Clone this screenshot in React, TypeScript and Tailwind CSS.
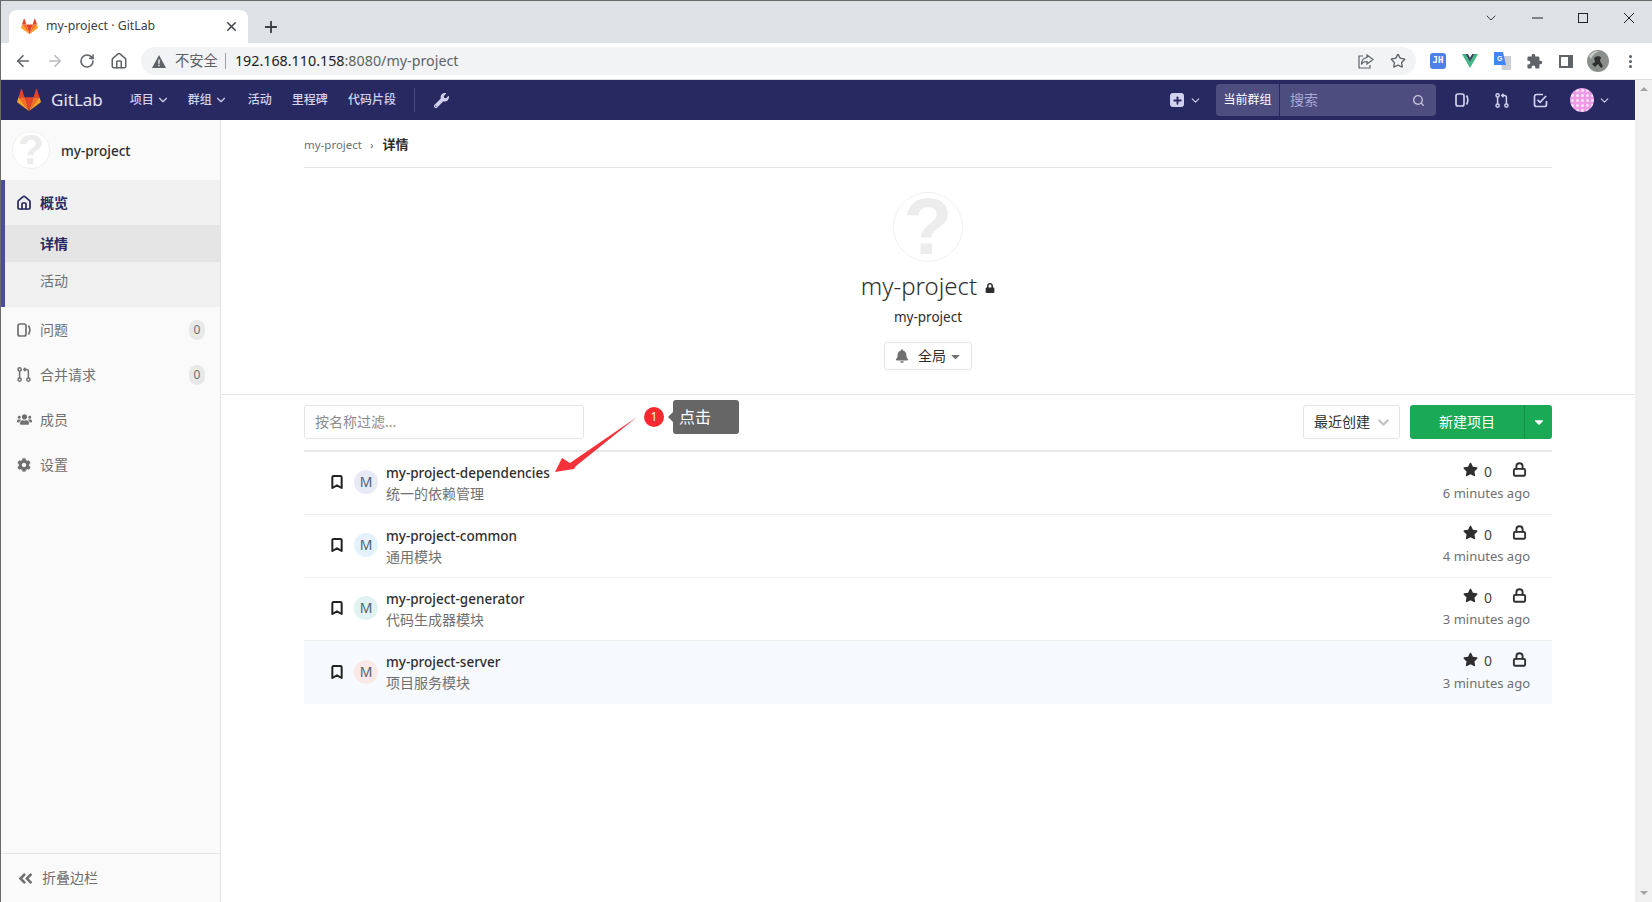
import { ArrowLeft, ArrowRight, Bookmark, ChevronDown, House, Lock, MoreVertical, RotateCw, Search, Star, X, Plus } from 'lucide-react';
import { FaAngleDoubleLeft, FaBell, FaCaretDown, FaCog, FaLock, FaStar, FaUsers, FaWrench } from 'react-icons/fa';
import { MdExtension } from 'react-icons/md';

const FONT = "font-['Noto_Sans','Noto_Sans_CJK_SC',sans-serif]";

const projects = [
  { name: 'my-project-dependencies', desc: '统一的依赖管理', time: '6 minutes ago', avatar: 'bg-[#e8eaf6]' },
  { name: 'my-project-common', desc: '通用模块', time: '4 minutes ago', avatar: 'bg-[#e3f2fd]' },
  { name: 'my-project-generator', desc: '代码生成器模块', time: '3 minutes ago', avatar: 'bg-[#e0f2f1]' },
  { name: 'my-project-server', desc: '项目服务模块', time: '3 minutes ago', avatar: 'bg-[#fbe9e7]', hover: true },
];

function Tanuki({ size }: { size: number }) {
  return (
    <svg width={size} height={size} viewBox="0 0 36 34">
      <path fill="#e24329" d="M18 33.5 24.6 13H11.4z" />
      <path fill="#fc6d26" d="M18 33.5 11.4 13H2.2z" />
      <path fill="#fca326" d="M2.2 13 .2 19.2c-.2.6 0 1.2.5 1.5L18 33.5z" />
      <path fill="#e24329" d="M2.2 13h9.2L7.4.8c-.2-.6-1-.6-1.2 0z" />
      <path fill="#fc6d26" d="M18 33.5 24.6 13h9.2z" />
      <path fill="#fca326" d="M33.8 13l2 6.2c.2.6 0 1.2-.5 1.5L18 33.5z" />
      <path fill="#e24329" d="M33.8 13h-9.2L28.6.8c.2-.6 1-.6 1.2 0z" />
    </svg>
  );
}

function IssuesIcon({ className }: { className?: string }) {
  return (
    <svg width="14" height="14" viewBox="0 0 14 14" fill="none" stroke="currentColor" strokeWidth="1.7" className={className}>
      <rect x="1" y="1" width="8" height="12" rx="2" />
      <path d="M11.5 2.5c1.6 2.6 1.6 6.4 0 9" />
    </svg>
  );
}

function MergeIcon({ className }: { className?: string }) {
  return (
    <svg width="14" height="15" viewBox="0 0 14 15" fill="none" stroke="currentColor" strokeWidth="1.5" className={className}>
      <circle cx="2.6" cy="2.4" r="1.6" />
      <circle cx="2.6" cy="12.6" r="1.6" />
      <circle cx="11.4" cy="12.6" r="1.6" />
      <path d="M2.6 4v7M11.4 11V4.500c0-1.200-.8-2-2-2H7" />
      <path d="M8.500.8 6.800 2.500l1.700 1.700" />
    </svg>
  );
}

function TodoIcon() {
  return (
    <svg width="15" height="15" viewBox="0 0 15 15" fill="none" stroke="currentColor" strokeWidth="1.7">
      <path d="M13.500 8v3.500a2 2 0 0 1-2 2h-8a2 2 0 0 1-2-2v-8a2 2 0 0 1 2-2H10" />
      <path d="m4.500 6.800 2.600 2.600 6-6.400" />
    </svg>
  );
}

function ProjectIdenticon({ className }: { className: string }) {
  return (
    <div className={`flex items-center justify-center rounded-full bg-white border border-[#f0f0f0] text-[#ececec] font-bold font-['Liberation_Sans',sans-serif] ${className}`}>
      ?
    </div>
  );
}

function ToolSlot({ children }: { children: React.ReactNode }) {
  return <div className="w-8 h-full flex items-center justify-center shrink-0">{children}</div>;
}

function BrowserChrome() {
  return (
    <div className="shrink-0">
      <div className="h-[43px] bg-[#dee1e6] border-t border-[#6b6b6b] flex items-end pl-2">
        <div className="w-[239px] h-[33px] bg-white rounded-t-lg flex items-center pl-3 pr-[9px] text-[#3c4043] text-[12.3px]">
          <Tanuki size={17} />
          <span className="ml-2 flex-1">my-project · GitLab</span>
          <X size={15} strokeWidth={2.5} className="text-[#45494d]" />
        </div>
        <div className="h-[33px] ml-[14px] flex items-center">
          <Plus size={18} strokeWidth={2.5} className="text-[#3c4043]" />
        </div>
        <div className="flex-1" />
        <div className="self-start mt-[9px] flex items-center text-[#222] pr-[17px]">
          <ChevronDown size={16} strokeWidth={1.3} className="mr-[33px]" />
          <svg width="11" height="2" className="mr-[35px]"><path d="M0 1h11" stroke="currentColor" /></svg>
          <svg width="10" height="10" className="mr-[35px]"><rect x=".5" y=".5" width="9" height="9" fill="none" stroke="currentColor" /></svg>
          <svg width="12" height="12"><path d="M1 1l10 10M11 1 1 11" stroke="currentColor" /></svg>
        </div>
      </div>
      <div className="h-[37px] bg-white border-b border-[#dadce0] flex items-center pl-[6px] text-[#5f6368]">
        <ToolSlot><ArrowLeft size={18} strokeWidth={2.2} /></ToolSlot>
        <ToolSlot><ArrowRight size={18} strokeWidth={2.2} className="text-[#b8babd]" /></ToolSlot>
        <ToolSlot><RotateCw size={16} strokeWidth={2.4} /></ToolSlot>
        <ToolSlot><House size={18} strokeWidth={2} /></ToolSlot>
        <div className="ml-[6px] w-[1275px] shrink-0 h-7 rounded-full bg-[#f1f3f4] flex items-center pl-[11px] pr-[10px] text-[14.3px]">
          <svg width="14" height="13" viewBox="0 0 14 13"><path fill="#5f6368" d="M7 0l7 13H0z" /><path fill="#f1f3f4" d="M6.300 4.500h1.400v4.300H6.300zM6.300 9.800h1.400v1.400H6.300z" /></svg>
          <span className="ml-[9px] text-[#5f6368]">不安全</span>
          <span className="ml-[7px] h-4 w-px bg-[#9aa0a6]" />
          <span className="ml-[9px] text-[#202124]">192.168.110.158<span className="text-[#5f6368]">:8080/my-project</span></span>
          <div className="flex-1" />
          <svg width="16" height="15" viewBox="0 0 16 15" fill="none" stroke="currentColor" strokeWidth="1.2">
            <path d="M5 2H1v12h11v-3" />
            <path d="M9 1l6 4.500L9 10V7.500c-3 0-4.500 1-5.500 3 0-4 2-6.500 5.500-7z" />
          </svg>
          <Star size={16} strokeWidth={2} className="ml-[16px]" />
        </div>
        <div className="ml-[6px] flex h-full">
          <ToolSlot>
            <div className="w-4 h-4 rounded-[3px] bg-[#4f7fe8] text-white text-[9px] font-bold flex items-center justify-center font-['DejaVu_Sans_Mono',monospace]">JH</div>
          </ToolSlot>
          <ToolSlot>
            <svg width="16" height="14" viewBox="0 0 16 14">
              <path fill="#41b883" d="M0 0h3.400L8 8l4.600-8H16L8 14z" />
              <path fill="#35495e" d="M3.400 0h2.500L8 3.800 10.100 0h2.500L8 8z" />
            </svg>
          </ToolSlot>
          <ToolSlot>
            <svg width="17" height="18" viewBox="0 0 17 18">
              <path fill="#ccd0d4" d="M6 4h11v14H8z" />
              <path fill="#4285f4" d="M0 0h9l3 13H0z" />
              <text x="3" y="9" fontSize="7" fill="white" fontWeight="700" fontFamily="Liberation Sans">G</text>
            </svg>
          </ToolSlot>
          <ToolSlot><MdExtension size={17} /></ToolSlot>
          <ToolSlot>
            <svg width="14" height="13"><path fillRule="evenodd" fill="currentColor" d="M0 0h14v13H0zM2 2v9h7V2z" /></svg>
          </ToolSlot>
          <ToolSlot>
            <svg width="22" height="22" viewBox="0 0 22 22">
              <circle cx="11" cy="11" r="11" fill="#8b8f8c" />
              <path fill="#2f2f2f" d="M7 8c2-2 5-2 7-1l-1 4 3 5-2 2-3-4-3 3-3-3 3-2z" />
              <path fill="#c9cbc8" d="M2 6c3-4 6-5 10-5-3 2-6 3-8 8z" />
            </svg>
          </ToolSlot>
          <ToolSlot><MoreVertical size={17} strokeWidth={2.4} /></ToolSlot>
        </div>
      </div>
    </div>
  );
}

function TopNav() {
  return (
    <div className="h-10 shrink-0 bg-[#292961] flex items-center pl-4 text-[#d1d1f0] text-xs">
      <Tanuki size={24} />
      <span className="ml-[10px] text-[17px] text-[#e4e4f4]">GitLab</span>
      <span className="ml-[27px] font-medium">项目</span>
      <ChevronDown size={14} className="ml-[2px]" />
      <span className="ml-[18px] font-medium">群组</span>
      <ChevronDown size={14} className="ml-[2px]" />
      <span className="ml-[20px] font-medium">活动</span>
      <span className="ml-[20px] font-medium">里程碑</span>
      <span className="ml-[20px] font-medium">代码片段</span>
      <span className="ml-[18px] h-[24px] w-px bg-[#4a4a82]" />
      <FaWrench size={15} className="ml-[19px]" />
      <div className="flex-1" />
      <div className="w-[14px] h-[14px] rounded-[3px] bg-[#d1d1f0] flex items-center justify-center">
        <Plus size={11} strokeWidth={4} className="text-[#292961]" />
      </div>
      <ChevronDown size={13} className="ml-[5px]" />
      <div className="ml-[14px] w-[220px] h-8 rounded bg-[#4d4d80] flex items-center">
        <div className="w-[64px] h-full border-r border-[#292961] flex items-center justify-center text-white">当前群组</div>
        <span className="ml-[10px] text-sm text-[#a9a9d6]">搜索</span>
        <div className="flex-1" />
        <Search size={13} strokeWidth={2.6} className="mr-[11px] text-[#c4c4dc]" />
      </div>
      <IssuesIcon className="ml-[19px]" />
      <MergeIcon className="ml-[26px]" />
      <div className="ml-[24px]"><TodoIcon /></div>
      <svg width="24" height="24" viewBox="0 0 24 24" className="ml-[22px]">
        <defs>
          <pattern id="av" width="5" height="5" patternUnits="userSpaceOnUse">
            <rect width="5" height="5" fill="#ee9be6" />
            <circle cx="2.500" cy="2.500" r="1.500" fill="#fbe3f8" />
          </pattern>
        </defs>
        <circle cx="12" cy="12" r="12" fill="url(#av)" />
      </svg>
      <ChevronDown size={13} className="ml-[4px]" />
      <div className="w-[24px]" />
    </div>
  );
}

function SideRow({ icon, label, count }: { icon: React.ReactNode; label: string; count?: number }) {
  return (
    <div className="h-[45px] flex items-center pl-4 pr-[15px] text-sm text-[#707070]">
      <span className="w-[23px] flex items-center">{icon}</span>
      <span className="flex-1">{label}</span>
      {count !== undefined && (
        <span className="w-4 h-5 rounded-full bg-[#e8e8e8] flex items-center justify-center text-xs">{count}</span>
      )}
    </div>
  );
}

function Sidebar() {
  return (
    <aside className="w-[220px] shrink-0 bg-[#fafafa] border-r border-[#e5e5e5] flex flex-col">
      <div className="h-[60px] flex items-center pl-[11px]">
        <ProjectIdenticon className="w-[38px] h-[38px] text-[42px] leading-none" />
        <span className="ml-[11px] mt-[2px] text-[13.5px] font-medium text-[#2e2e2e]">my-project</span>
      </div>
      <div className="h-[127px] bg-[#f0f0f0] border-l-4 border-[#4b4ba3]">
        <div className="h-[45px] flex items-center pl-[11px] text-sm font-bold text-[#292961]">
          <House size={16} strokeWidth={2.6} />
          <span className="ml-[8px]">概览</span>
        </div>
        <div className="h-[37px] flex items-center pl-[35px] bg-[#e5e5e5] text-sm font-bold text-[#292961]">详情</div>
        <div className="h-[37px] flex items-center pl-[35px] text-sm text-[#707070]">活动</div>
      </div>
      <SideRow icon={<IssuesIcon />} label="问题" count={0} />
      <SideRow icon={<MergeIcon />} label="合并请求" count={0} />
      <SideRow icon={<FaUsers size={15} />} label="成员" />
      <SideRow icon={<FaCog size={14} />} label="设置" />
      <div className="flex-1" />
      <div className="h-[49px] border-t border-[#e5e5e5] flex items-center pl-4 text-sm text-[#707070]">
        <FaAngleDoubleLeft size={17} />
        <span className="ml-2">折叠边栏</span>
      </div>
    </aside>
  );
}

function ProjectRow({ project }: { project: (typeof projects)[number] }) {
  return (
    <div className={`h-[63px] flex items-center border-b border-[#eeeeee] pl-[25px] pr-[22px] ${project.hover ? 'bg-[#f6fafe] border-b-0' : ''}`}>
      <Bookmark size={16} strokeWidth={3} className="text-[#222] mb-[2px]" />
      <div className={`ml-[9px] mb-[2px] w-[24px] h-[24px] rounded-full flex items-center justify-center text-sm text-[#555f7a] ${project.avatar}`}>M</div>
      <div className="ml-2 flex-1">
        <div className="text-[13.5px] leading-[21px] font-medium text-[#2e2e2e]">{project.name}</div>
        <div className="text-sm leading-[20px] text-[#707070]">{project.desc}</div>
      </div>
      <div className="flex flex-col items-end">
        <div className="h-[21px] flex items-center text-[#2e2e2e] text-sm pr-[3px] -translate-y-[3px]">
          <FaStar size={15} />
          <span className="ml-[6px] text-[#444] translate-y-[2px]">0</span>
          <Lock size={15} strokeWidth={3} className="ml-[20px]" />
        </div>
        <div className="text-[13px] leading-[21px] text-[#707070]">{project.time}</div>
      </div>
    </div>
  );
}

function Main() {
  return (
    <main className="relative flex-1 bg-white flex flex-col">
      <div className="mx-[83px] h-[48px] border-b border-[#e5e5e5] flex items-center pt-[3px] text-[11.5px]">
        <span className="text-[#707070]">my-project</span>
        <span className="ml-[8px] mr-[9px] text-[#707070]">›</span>
        <span className="font-bold text-[#2e2e2e] text-[13px]">详情</span>
      </div>
      <div className="h-[227px] border-b border-[#e5e5e5] flex flex-col items-center">
        <ProjectIdenticon className="mt-[24px] w-[70px] h-[70px] text-[80px] leading-none" />
        <div className="mt-[6px] flex items-center text-[#2e2e2e]">
          <span className="text-[24px] leading-[36px] font-light">my-project</span>
          <FaLock size={10} className="ml-2 mt-1" />
        </div>
        <div className="mt-[3px] text-[13.5px] leading-5 text-[#2e2e2e]">my-project</div>
        <div className="mt-[15px] w-[88px] h-[28px] border border-[#e5e5e5] rounded-[3px] flex items-center pl-[10px] text-sm text-[#2e2e2e]">
          <FaBell size={14} className="text-[#707070]" />
          <span className="ml-[9px]">全局</span>
          <FaCaretDown size={13} className="ml-[3px] text-[#707070]" />
        </div>
      </div>
      <div className="mx-[83px] flex flex-col">
        <div className="h-[57px] flex items-start pt-[10px] border-b-2 border-[#e8e8e8]">
          <div className="w-[280px] h-[34px] border border-[#e5e5e5] rounded-[3px] flex items-center pl-[10px] text-sm text-[#8c8c8c]">按名称过滤...</div>
          <div className="flex-1" />
          <div className="w-[97px] h-[34px] border border-[#e5e5e5] rounded-[3px] flex items-center pl-[10px] text-sm text-[#2e2e2e]">
            <span>最近创建</span>
            <ChevronDown size={17} strokeWidth={3} className="ml-[5px] text-[#c4c4c4]" />
          </div>
          <div className="ml-[10px] w-[142px] h-[34px] rounded-[3px] bg-[#1aaa55] flex text-white">
            <div className="w-[115px] flex items-center justify-center text-sm border-r border-[#168f48]">新建项目</div>
            <div className="flex-1 flex items-center justify-center"><FaCaretDown size={14} /></div>
          </div>
        </div>
        {projects.map((project) => (
          <ProjectRow key={project.name} project={project} />
        ))}
      </div>
      {/* step annotation pasted over the page */}
      <svg width="100" height="70" viewBox="0 0 100 70" className="absolute left-[330px] top-[290px]">
        <path fill="#f5323a" d="M86 7 19 53l-8-5-7 14 19-3 2-3z" />
      </svg>
      <div className="absolute left-[423px] top-[287px] w-5 h-5 rounded-full bg-[#f5292f] text-white text-xs flex items-center justify-center">1</div>
      <div className="absolute left-[452px] top-[280px] w-[66px] h-[34px] rounded-[3px] bg-[#666666] text-white text-base flex items-center pl-[6px]">
        点击
        <span className="absolute -left-[5px] top-[12px] w-0 h-0 border-y-[5px] border-y-transparent border-r-[5px] border-r-[#666666]" />
      </div>
    </main>
  );
}

export default function App() {
  return (
    <div className={`h-screen overflow-hidden flex flex-col bg-white border-l border-[#6b6b6b] ${FONT}`}>
      <BrowserChrome />
      <div className="flex-1 flex min-h-0">
        <div className="flex-1 flex flex-col min-w-0">
          <TopNav />
          <div className="flex-1 flex min-h-0">
            <Sidebar />
            <Main />
          </div>
        </div>
        <div className="w-[17px] shrink-0 bg-[#f0f0f0] flex flex-col items-center justify-between pt-[7px] pb-[7px]">
          <div className="w-0 h-0 border-x-[4px] border-x-transparent border-b-[4px] border-b-[#a3a3a3]" />
          <div className="w-0 h-0 border-x-[4px] border-x-transparent border-t-[4px] border-t-[#a3a3a3]" />
        </div>
      </div>
    </div>
  );
}
